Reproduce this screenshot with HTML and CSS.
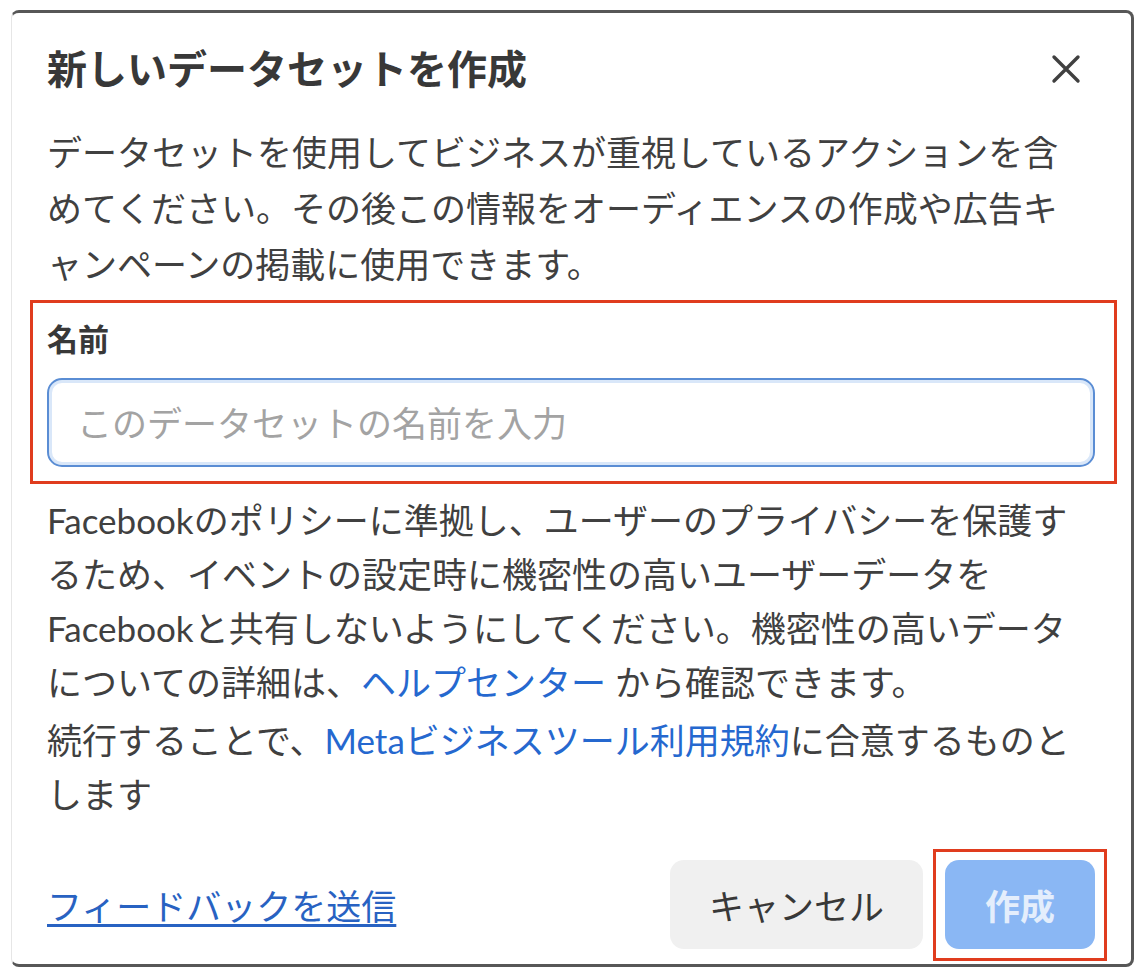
FILE: index.html
```html
<!DOCTYPE html>
<html lang="ja">
<head>
    <meta charset="UTF-8">
    <meta name="viewport" content="width=device-width, initial-scale=1.0">
    <title>新しいデータセットを作成</title>
    <link rel="stylesheet" href="styles.css">
</head>
<body>
    <div class="dialog">
        <div class="dialog-header">
            <h1 class="dialog-title">新しいデータセットを作成</h1>
            <button class="close-btn" aria-label="閉じる">
                <svg width="30" height="30" viewBox="0 0 30 30">
                    <path d="M3 3 L27 27 M27 3 L3 27" stroke="#404040" stroke-width="3.4" stroke-linecap="round"/>
                </svg>
            </button>
        </div>

        <p class="intro">データセットを使用してビジネスが重視しているアクションを含<br>めてください。その後この情報をオーディエンスの作成や広告キ<br>ャンペーンの掲載に使用できます。</p>

        <div class="field highlight">
            <label class="field-label" for="datasetName">名前</label>
            <input class="field-input" id="datasetName" type="text" placeholder="このデータセットの名前を入力">
        </div>

        <p class="note">Facebookのポリシーに準拠し、ユーザーのプライバシーを保護す<br>るため、イベントの設定時に機密性の高いユーザーデータを<br>Facebookと共有しないようにしてください。機密性の高いデータ<br>についての詳細は、<a href="#" class="link">ヘルプセンター</a> から確認できます。</p>

        <p class="terms">続行することで、<a href="#" class="link">Metaビジネスツール利用規約</a>に合意するものと<br>します</p>

        <div class="dialog-footer">
            <a href="#" class="feedback-link">フィードバックを送信</a>
            <div class="actions">
                <button class="cancel-btn">キャンセル</button>
                <button class="create-btn highlight" disabled>作成</button>
            </div>
        </div>
    </div>
</body>
</html>
```

FILE: styles.css
```css
body {
    margin: 0;
    background-color: #fff;
    font-family: "Lato", "Noto Sans CJK JP", sans-serif;
    color: #404040;
}
.dialog {
    margin: 10px 10px 0 11px;
    padding: 0 36px 15px 35px;
    background-color: #fff;
    border-top: 3px solid #575757;
    border-right: 3px solid #575757;
    border-bottom: 3px solid #575757;
    border-left: 1px solid #e6e6e6;
    border-radius: 8px;
}
.dialog-header {
    height: 111px;
    display: flex;
    align-items: center;
    justify-content: space-between;
}
.dialog-title {
    margin: 0;
    font-size: 40px;
    line-height: 56px;
    font-weight: bold;
    color: #383838;
}
.close-btn {
    background: none;
    border: none;
    padding: 0;
    margin-right: 14px;
    width: 30px;
    height: 30px;
    cursor: pointer;
    display: flex;
}
.intro {
    margin: 0 0 8px;
    font-size: 35px;
    line-height: 56px;
}
.field {
    position: relative;
    padding: 19px 0 17px;
}
.field-label {
    display: block;
    font-size: 31px;
    line-height: 40px;
    font-weight: bold;
    color: #383838;
    margin-bottom: 19px;
}
.field-input {
    display: block;
    width: 100%;
    box-sizing: border-box;
    height: 89px;
    padding: 0 28px;
    border: 2px solid #5a8dd4;
    border-radius: 15px;
    box-shadow: inset 0 0 0 3px #d9e7f9;
    font-family: inherit;
    font-size: 35px;
    color: #333;
    outline: none;
}
.field-input::placeholder {
    color: #a3a3a3;
}
.highlight::after {
    content: "";
    position: absolute;
    border: 3px solid #e03c1e;
    pointer-events: none;
}
.field.highlight::after {
    top: 0;
    bottom: 0;
    left: -17px;
    right: -22px;
}
.note {
    margin: 9px 0 4px;
    font-size: 35px;
    line-height: 54px;
}
.terms {
    margin: 0;
    font-size: 35px;
    line-height: 54px;
}
.link {
    color: #2568cf;
    text-decoration: none;
}
.dialog-footer {
    margin-top: 39px;
    display: flex;
    align-items: center;
    justify-content: space-between;
}
.feedback-link {
    font-size: 35px;
    color: #2862c2;
    text-decoration: underline;
    text-underline-offset: 4px;
}
.actions {
    display: flex;
    gap: 22px;
}
.cancel-btn, .create-btn {
    height: 89px;
    border: none;
    border-radius: 14px;
    font-family: inherit;
    font-size: 35px;
    cursor: pointer;
}
.cancel-btn {
    width: 253px;
    background-color: #f0f0f0;
    color: #383838;
}
.create-btn {
    position: relative;
    width: 150px;
    background-color: #8ab7f4;
    color: #e4eefc;
    font-weight: bold;
}
.create-btn.highlight::after {
    top: -11px;
    bottom: -12px;
    left: -12px;
    right: -12px;
}
```
